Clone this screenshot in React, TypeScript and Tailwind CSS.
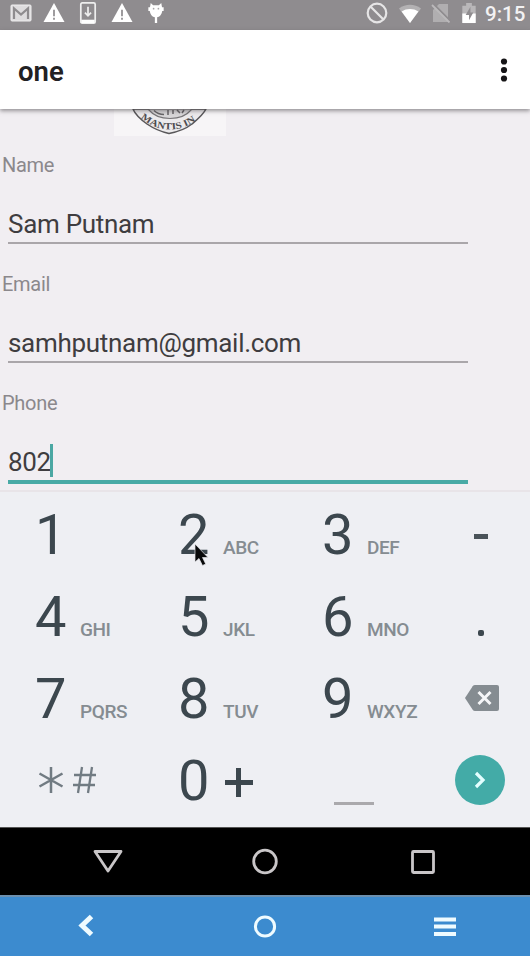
import React from 'react';

type KeyDef = { digit: string; letters: string };

const keyRows: KeyDef[][] = [
  [
    { digit: '1', letters: '' },
    { digit: '2', letters: 'ABC' },
    { digit: '3', letters: 'DEF' },
  ],
  [
    { digit: '4', letters: 'GHI' },
    { digit: '5', letters: 'JKL' },
    { digit: '6', letters: 'MNO' },
  ],
  [
    { digit: '7', letters: 'PQRS' },
    { digit: '8', letters: 'TUV' },
    { digit: '9', letters: 'WXYZ' },
  ],
];

function Warning({ className }: { className: string }) {
  return (
    <svg viewBox="0 0 24 22" className={className}>
      <path d="M12 1 23 21H1Z" fill="#fff" />
      <path d="M12 8v7M12 16.5v2" stroke="#8f8c8f" strokeWidth="1.8" />
    </svg>
  );
}

function StatusBar() {
  return (
    <header className="flex h-[30px] shrink-0 items-start bg-[#8f8c8f] pt-[2px] text-white">
      <svg viewBox="0 0 22 18" className="mt-[2px] ml-[10px] h-[18px] w-[22px]">
        <rect x="1" y="1" width="20" height="16" rx="1" fill="#dedcde" stroke="#efeeef" />
        <path d="M4 15V4.5l7 6 7-6V15" fill="none" stroke="#8f8c8f" strokeWidth="2.2" />
      </svg>
      <Warning className="ml-[10px] h-[21px] w-[24px]" />
      <svg viewBox="0 0 18 24" className="ml-[13px] h-[23px] w-[18px]">
        <rect x="1.5" y="1" width="15" height="21" rx="1.5" fill="none" stroke="#eee" strokeWidth="1.8" />
        <path d="M2 18.5h14V22H2Z" fill="#fff" />
        <path d="M9 5v9M5.8 11 9 14.4l3.2-3.4" fill="none" stroke="#eee" strokeWidth="1.8" />
      </svg>
      <Warning className="ml-[13px] h-[21px] w-[24px]" />
      <svg viewBox="0 0 18 23" className="ml-[13px] h-[22px] w-[18px]">
        <path
          d="M3.5 1 6 3.5h6L14.5 1l.8 4.5H17v4h-1.5C15 13.5 12.5 15.8 10.2 16v6H7.8v-6C5.5 15.8 3 13.5 2.5 9.5H1v-4h1.7Z"
          fill="#fff"
        />
        <circle cx="6.5" cy="7" r="0.9" fill="#aaa8aa" />
        <circle cx="11.5" cy="7" r="0.9" fill="#aaa8aa" />
      </svg>

      <svg viewBox="0 0 22 22" className="ml-auto h-[22px] w-[22px]">
        <circle cx="11" cy="11" r="9.3" fill="none" stroke="#e6e5e6" strokeWidth="2.2" />
        <path d="m4.5 4.500 13 13" stroke="#e6e5e6" strokeWidth="2.2" />
      </svg>
      <svg viewBox="0 0 24 20" className="ml-[10px] mt-px h-[20px] w-[24px]">
        <path d="M12 20 1 5.500C7.500.500 16.500.500 23 5.500Z" fill="#b3b1b3" />
        <path d="M12 20 3.600 8.500c5-3.300 11.800-3.300 16.800 0Z" fill="#fff" />
      </svg>
      <svg viewBox="0 0 20 20" className="ml-[9px] mt-px h-[20px] w-[20px]">
        <path d="M8 1h9v18H2V7Z" fill="#b0aeb0" />
        <path d="m2.500 1 17 17" stroke="#8f8c8f" strokeWidth="1.800" />
        <path d="m1 2 17.500 17.500" stroke="#bbb9bb" strokeWidth="1.800" />
      </svg>
      <svg viewBox="0 0 16 22" className="ml-[10px] mt-px h-[21px] w-[16px]">
        <path d="M5 0h6v3h4v18H1V3h4Z" fill="#b9b7b9" />
        <path d="M1 11h14v10H1Z" fill="#fff" />
        <path d="M9.500 4 4.500 12.500H8V18l4.500-8H9.500Z" fill="#8f8c8f" />
      </svg>
      <span className="mr-[4px] ml-[8px] w-[41px] text-[20.5px] leading-[25px] font-medium text-[#f3f2f3]">
        9:15
      </span>
    </header>
  );
}

function Seal() {
  return (
    <div className="ml-[114px] h-[27px] w-[112px] bg-[#f7f5f7]">
      <svg viewBox="0 0 112 27" className="h-[27px] w-[112px]">
        <path d="M19 0c2 5 7 10 14 15 8 5.500 15 8 22 9.500 8-1.500 16-4 23-9.500 6-5 11-9 14-15Z" fill="#eceaec" stroke="#59575a" strokeWidth="1.500" />
        <path d="M34 0c5 6 13 9.500 22 9.500S73 6 78 0Z" fill="#d8d6d8" stroke="#777578" strokeWidth="1.200" />
        <path d="M40 1.500c3 3 7 4 10 4M54 1v5m5-5v4m4-4 3 3m4-3-2 3" fill="none" stroke="#656366" strokeWidth="1.500" />
        <path id="sealArc" d="M22 5C33 15 43 20.500 56 20.500S79 15 90 5" fill="none" />
        <text className="font-['Liberation_Serif',serif] text-[9.5px] font-bold" fill="#4d4b4e">
          <textPath href="#sealArc" startOffset="6" textLength="60" lengthAdjust="spacingAndGlyphs">
            MANTIS IN
          </textPath>
        </text>
      </svg>
    </div>
  );
}

function Field({ label, value, active = false }: { label: string; value: string; active?: boolean }) {
  return (
    <div className="h-[119px]">
      <div className="pl-[2px] text-[20px] leading-none tracking-[-0.3px] text-[#8b888c]">{label}</div>
      <div
        className={
          active
            ? 'mt-[36px] ml-[8px] flex h-[35px] w-[460px] border-b-[4px] border-[#49aaa6]'
            : 'mt-[36px] ml-[8px] flex h-[33px] w-[460px] border-b-2 border-[#aaa6aa]'
        }
      >
        <span className="text-[26px] leading-none tracking-[-0.3px] text-[#3f3d40]">{value}</span>
        {active && <span className="-mt-[5px] -ml-[1px] h-[33px] w-[3px] bg-[#4ba7a3]" />}
      </div>
    </div>
  );
}

function Keypad() {
  return (
    <section className="relative h-[337px] shrink-0 border-t-2 border-[#e8e4e8] bg-[#eeeff3] pt-[3px] text-[#3c474e]">
      <div className="flex">
        <div className="w-[430px]">
          {keyRows.map((row, r) => (
            <div key={r} className="grid h-[82px] grid-cols-[143px_144px_143px] pt-[12px]">
              {row.map((k) => (
                <div key={k.digit} className="flex items-baseline pl-[35px] leading-none">
                  <span className="w-[45px] text-[56px] leading-none">{k.digit}</span>
                  <span className="text-[19px] leading-none font-medium tracking-[-0.4px] text-[#858c91]">{k.letters}</span>
                </div>
              ))}
            </div>
          ))}
          <div className="grid h-[84px] grid-cols-[143px_144px_143px] pt-[12px]">
            <svg viewBox="0 0 62 30" className="mt-[12px] ml-[37px] h-[30px] w-[62px]" fill="none" stroke="#717b82">
              <path d="M14 2v26M2.500 8.500l23 13M25.500 8.500l-23 13" strokeWidth="2.500" />
              <path d="m45 2-4 26m14-26-4 26M37 10h22M36 20h22" strokeWidth="2.300" />
            </svg>
            <div className="flex items-baseline pl-[35px]">
              <span className="w-[45px] text-[56px] leading-none">0</span>
              <svg viewBox="0 0 30 34" className="h-[34px] w-[30px]">
                <path d="M15.500 2v29M2 16.500h28" stroke="#3c474e" strokeWidth="5" />
              </svg>
            </div>
            <span className="mt-[49px] ml-[47px] h-[3px] w-[40px] bg-[#aaa9ac]" />
          </div>
        </div>
        <div className="flex w-[100px] flex-col items-center">
          <span className="mt-[39px] ml-[2px] h-[5px] w-[14px] bg-[#4a5359]" />
          <span className="mt-[91px] ml-[2px] h-[6px] w-[6px] rounded-[2px] bg-[#3c474e]" />
          <svg viewBox="0 0 34 26" className="mt-[49px] ml-[3px] h-[26px] w-[34px]">
            <path d="M10 0h22a2 2 0 0 1 2 2v22a2 2 0 0 1-2 2H10a3 3 0 0 1-2.300-1.200L0 13 7.700 1.200A3 3 0 0 1 10 0Z" fill="#858c91" />
            <path d="m13.500 7 12 12m0-12-12 12" stroke="#f5f6f8" strokeWidth="3" />
          </svg>
          <span className="mt-[44px] flex h-[50px] w-[50px] items-center justify-center rounded-full bg-[#43aba7]">
            <svg viewBox="0 0 14 20" className="h-[20px] w-[14px]">
              <path d="m3 3 7 7-7 7" fill="none" stroke="#e3ffff" strokeWidth="3.200" />
            </svg>
          </span>
        </div>
      </div>
      <svg viewBox="0 0 16 24" className="absolute top-[51px] left-[194px] h-[24px] w-[16px]">
        <path d="M1 1v18l4-3.500 3.500 7 3.200-1.500-3.200-6.500H14Z" fill="#08090a" stroke="#e2e4e8" strokeWidth="0.700" />
      </svg>
    </section>
  );
}

export default function App() {
  return (
    <main className="flex h-[956px] w-[530px] flex-col overflow-hidden bg-[#f1eef2] font-[Roboto,sans-serif]">
      <StatusBar />
      <div className="z-10 flex h-[79px] shrink-0 items-center justify-between bg-white pr-[22px] pl-[18px] shadow-[0_2px_4px_rgba(60,55,60,0.5)]">
        <h1 className="mt-[4px] text-[27.5px] leading-none font-semibold text-[#222123]">one</h1>
        <svg viewBox="0 0 8 26" className="h-[26px] w-[8px]" fill="#161517">
          <circle cx="4" cy="4.500" r="3.100" />
          <circle cx="4" cy="13" r="3.100" />
          <circle cx="4" cy="21.500" r="3.100" />
        </svg>
      </div>
      <div className="h-[381px] shrink-0 overflow-hidden">
        <Seal />
        <div className="pt-[19px]">
          <Field label="Name" value="Sam Putnam" />
          <Field label="Email" value="samhputnam@gmail.com" />
          <Field label="Phone" value="802" active />
        </div>
      </div>
      <Keypad />
      <nav className="h-[68px] shrink-0 border-t border-[#555] bg-black">
        <svg viewBox="0 0 530 67" className="h-[67px] w-[530px]" fill="none" stroke="#c9c6c8" strokeWidth="2.800">
          <path d="M95 23.500h26L108 43Z" strokeLinejoin="round" />
          <circle cx="265" cy="33.500" r="11.300" />
          <rect x="412.500" y="23.500" width="21" height="21" rx="1" />
        </svg>
      </nav>
      <nav className="h-[61px] shrink-0 border-t-2 border-[#6c8fae] bg-[#3c8bcf]">
        <svg viewBox="0 0 530 59" className="h-[59px] w-[530px]" fill="none" stroke="#effbff">
          <path d="m91.500 19.500-9.500 9 9.500 9" strokeWidth="5" />
          <circle cx="265" cy="29.500" r="9.600" strokeWidth="3" />
          <path d="M434 22.500h22M434 29.500h22M434 37h22" strokeWidth="3.800" />
        </svg>
      </nav>
    </main>
  );
}
